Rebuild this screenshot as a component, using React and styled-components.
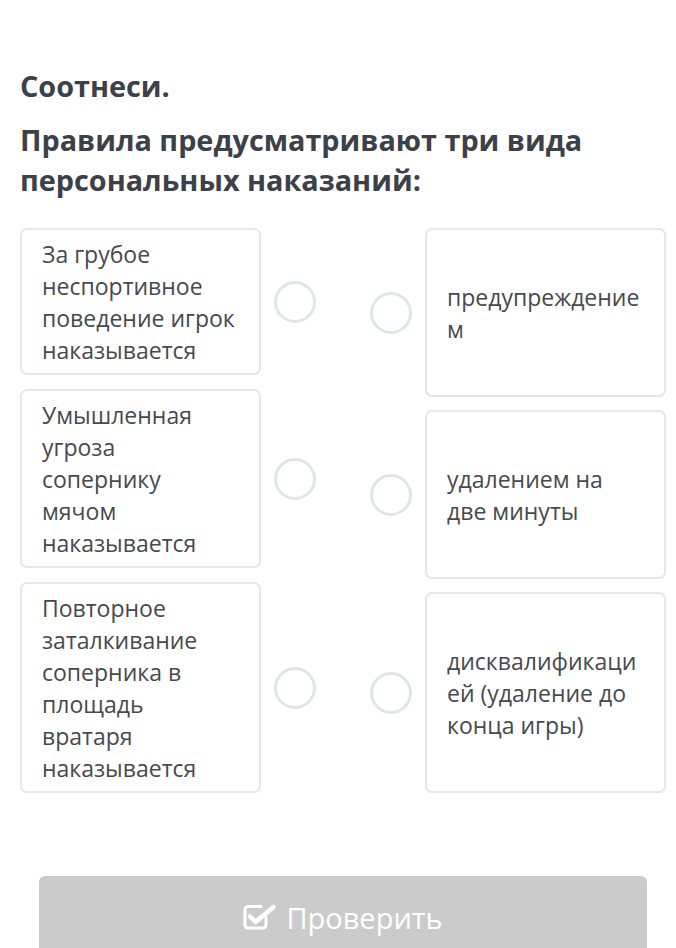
import React from "react";
import styled, { createGlobalStyle } from "styled-components";

const GlobalStyle = createGlobalStyle`
  html, body {
    margin: 0;
    padding: 0;
    background: #ffffff;
  }
  body {
    font-family: "Open Sans", "Noto Sans", Arial, sans-serif;
  }
`;

const Page = styled.div`
  width: 676px;
  padding: 66px 9px 0 20px;
  box-sizing: border-box;
`;

const Heading = styled.div`
  font-size: 28.8px;
  line-height: 40px;
  font-weight: 700;
  color: #3c4149;
  margin-bottom: ${(p) => p.$gap || 0}px;
`;

const Board = styled.div`
  display: grid;
  grid-template-columns: 296px 297px;
  column-gap: 54px;
  margin-top: 28px;
`;

const Column = styled.div`
  display: flex;
  flex-direction: column;
  gap: ${(p) => p.$gap}px;
`;

const Row = styled.div`
  display: flex;
  align-items: center;
  gap: 13px;
  flex: ${(p) => (p.$stretch ? "1 1 auto" : "0 0 auto")};
`;

const Card = styled.div`
  box-sizing: border-box;
  width: 241px;
  align-self: stretch;
  display: flex;
  align-items: center;
  padding: 8px 20px 7px 20px;
  border: 2px solid #e5e7e9;
  border-radius: 7px;
  font-size: 23px;
  line-height: 32px;
  color: #464a4f;
  overflow-wrap: anywhere;
`;

const Dot = styled.div`
  flex: 0 0 auto;
  box-sizing: border-box;
  width: 42px;
  height: 42px;
  border-radius: 50%;
  border: 3px solid #e2e5e8;
`;

const CheckButton = styled.button`
  display: flex;
  align-items: center;
  justify-content: center;
  gap: 10px;
  width: 608px;
  height: 86px;
  margin: 83px 0 0 19px;
  border: none;
  border-radius: 6px;
  background: #cbcbcb;
  color: #ffffff;
  font-family: "Open Sans", "Noto Sans", Arial, sans-serif;
  font-size: 29px;
  padding: 0 0 4px 0;
`;

const left = [
  "За грубое неспортивное поведение игрок наказывается",
  "Умышленная угроза сопернику мячом наказывается",
  "Повторное заталкивание соперника в площадь вратаря наказывается",
];

const right = [
  "предупреждением",
  "удалением на две минуты",
  "дисквалификацией (удаление до конца игры)",
];

const CheckIcon = () => (
  <svg width="33" height="26" viewBox="0 0 33 26" fill="none">
    <path
      d="M23 13V21a3 3 0 0 1-3 3H5a3 3 0 0 1-3-3V5.5a3 3 0 0 1 3-3H18"
      stroke="#fff"
      strokeWidth="3"
      strokeLinecap="round"
    />
    <path
      d="M7 12.5l5.5 5.5L30.5 3"
      stroke="#fff"
      strokeWidth="4.5"
      strokeLinecap="round"
      strokeLinejoin="round"
    />
  </svg>
);

export default function App() {
  return (
    <Page>
      <GlobalStyle />
      <Heading $gap={14}>Соотнеси.</Heading>
      <Heading>Правила предусматривают три вида персональных наказаний:</Heading>
      <Board>
        <Column $gap={14}>
          {left.map((t) => (
            <Row key={t}>
              <Card>{t}</Card>
              <Dot />
            </Row>
          ))}
        </Column>
        <Column $gap={13}>
          {right.map((t) => (
            <Row key={t} $stretch>
              <Dot />
              <Card>{t}</Card>
            </Row>
          ))}
        </Column>
      </Board>
      <CheckButton>
        <CheckIcon />
        Проверить
      </CheckButton>
    </Page>
  );
}
